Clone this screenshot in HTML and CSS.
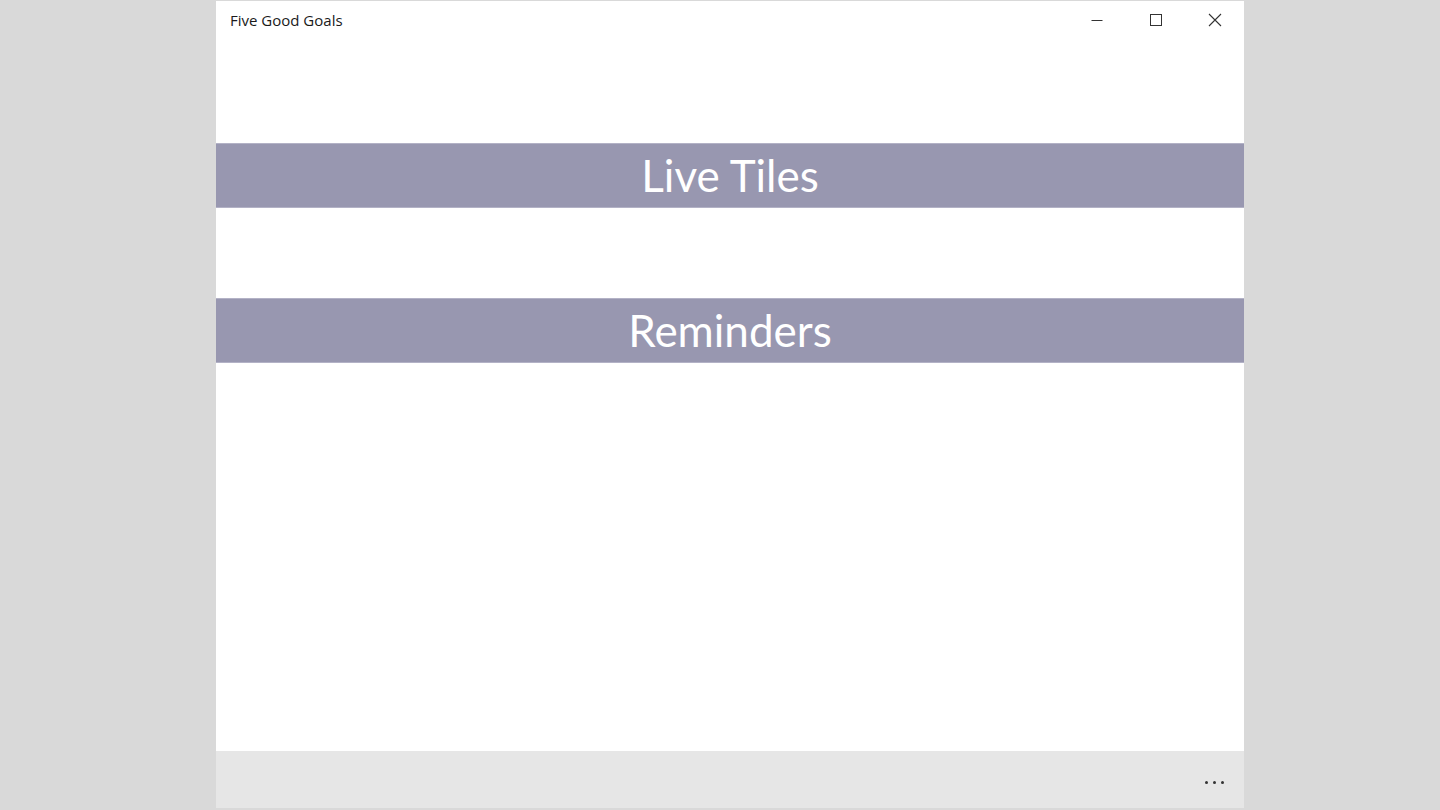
FILE: index.html
```html
<!DOCTYPE html>
<html>
<head>
<meta charset="utf-8">
<link rel="stylesheet" href="styles.css">
</head>
<body>
<div class="window">
  <div class="titlebar">
    <span class="title">Five Good Goals</span>
    <div class="controls">
      <span class="ctl"><svg width="12" height="12" viewBox="0 0 12 12"><path d="M0.5 6.5H11.5" stroke="#333" stroke-width="1"/></svg></span>
      <span class="ctl"><svg width="12" height="12" viewBox="0 0 12 12"><rect x="0.5" y="0.5" width="11" height="11" fill="none" stroke="#333" stroke-width="1"/></svg></span>
      <span class="ctl"><svg width="14" height="14" viewBox="0 0 14 14"><path d="M1 1L13 13M13 1L1 13" stroke="#333" stroke-width="1.1"/></svg></span>
    </div>
  </div>
  <div class="content">
    <div class="band band-first">Live Tiles</div>
    <div class="band band-second">Reminders</div>
  </div>
  <div class="commandbar">
    <span class="more"><i></i><i></i><i></i></span>
  </div>
</div>
</body>
</html>
```
FILE: styles.css
```css
html, body {
  margin: 0;
  padding: 0;
  height: 810px;
  overflow: hidden;
}
body {
  background: #d9d9d9;
  display: flex;
  justify-content: flex-start;
  padding-top: 1px;
  padding-left: 216px;
  box-sizing: border-box;
}
.window {
  width: 1028px;
  height: 807px;
  background: #ffffff;
  display: flex;
  flex-direction: column;
}
.titlebar {
  height: 40px;
  display: flex;
  align-items: center;
  justify-content: space-between;
  flex: none;
}
.title {
  font-family: "Open Sans", "Noto Sans", sans-serif;
  font-size: 15px;
  color: #1a1a1a;
  padding-left: 14px;
  margin-top: -3px;
}
.controls {
  display: flex;
  height: 100%;
  align-items: flex-start;
}
.ctl {
  width: 59px;
  height: 38px;
  display: flex;
  align-items: center;
  justify-content: center;
}
.content {
  flex: 1;
  display: flex;
  flex-direction: column;
}
.band {
  height: 65px;
  background: #9897b0;
  color: #ffffff;
  font-family: Lato, "Open Sans", sans-serif;
  font-size: 44px;
  line-height: 65px;
  text-align: center;
  box-shadow: inset 0 1px 0 #b3b2c6, inset 0 -1px 0 #b3b2c6;
}
.band-first {
  margin-top: 102px;
}
.band-second {
  margin-top: 90px;
}
.commandbar {
  height: 57px;
  background: #e6e6e6;
  flex: none;
  display: flex;
  justify-content: flex-end;
  align-items: flex-start;
}
.more {
  display: flex;
  gap: 5px;
  margin-top: 30px;
  margin-right: 20px;
}
.more i {
  width: 3px;
  height: 3px;
  border-radius: 50%;
  background: #333;
  display: block;
}
```
